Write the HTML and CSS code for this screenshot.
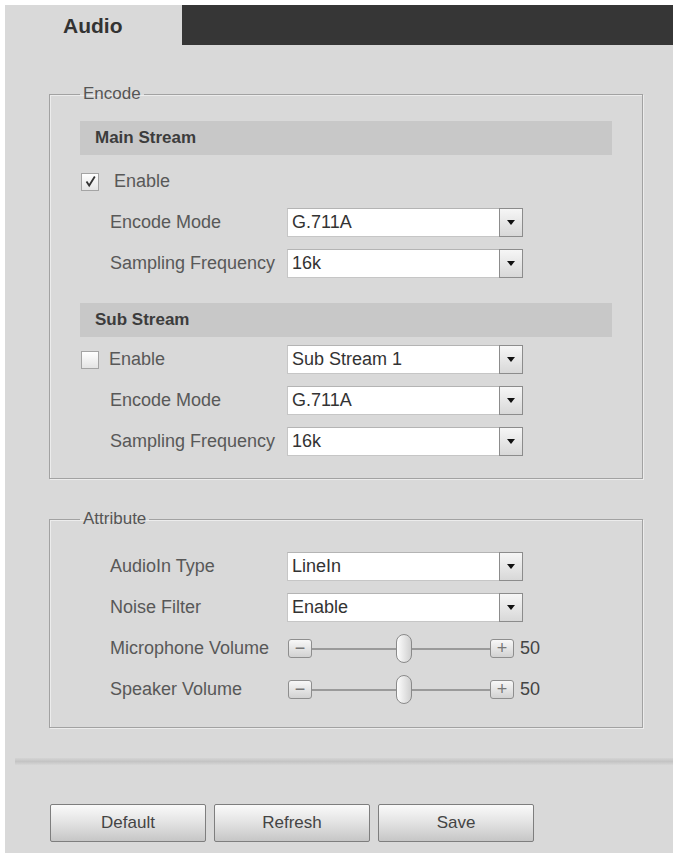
FILE: index.html
```html
<!DOCTYPE html>
<html lang="en">
<head>
  <meta charset="UTF-8">
  <meta name="viewport" content="width=device-width, initial-scale=1.0">
  <title>Audio</title>
  <link rel="stylesheet" href="styles.css">
</head>
<body>
  <div class="panel">
    <div class="tabs">
      <div class="tab">Audio</div>
      <div class="tab-fill"></div>
    </div>

    <div class="main">
      <fieldset class="group">
        <legend>Encode</legend>

        <div class="bar">Main Stream</div>
        <div class="row first">
          <div class="check-label">
            <span class="checkbox">
              <svg width="13" height="13" viewBox="0 0 13 13"><path d="M2.5 6.5 L5.2 10.5 L10.8 1.5" fill="none" stroke="#333" stroke-width="1.8"/></svg>
            </span>
            <span class="check-text">Enable</span>
          </div>
        </div>
        <div class="row">
          <div class="label">Encode Mode</div>
          <div class="select"><span class="value">G.711A</span><span class="arrow"></span></div>
        </div>
        <div class="row">
          <div class="label">Sampling Frequency</div>
          <div class="select"><span class="value">16k</span><span class="arrow"></span></div>
        </div>

        <div class="bar sub">Sub Stream</div>
        <div class="row sub-first">
          <div class="check-label">
            <span class="checkbox"></span>
            <span class="check-text narrow">Enable</span>
          </div>
          <div class="select"><span class="value">Sub Stream 1</span><span class="arrow"></span></div>
        </div>
        <div class="row">
          <div class="label">Encode Mode</div>
          <div class="select"><span class="value">G.711A</span><span class="arrow"></span></div>
        </div>
        <div class="row">
          <div class="label">Sampling Frequency</div>
          <div class="select"><span class="value">16k</span><span class="arrow"></span></div>
        </div>
      </fieldset>

      <fieldset class="group attr">
        <legend>Attribute</legend>

        <div class="row">
          <div class="label">AudioIn Type</div>
          <div class="select"><span class="value">LineIn</span><span class="arrow"></span></div>
        </div>
        <div class="row">
          <div class="label">Noise Filter</div>
          <div class="select"><span class="value">Enable</span><span class="arrow"></span></div>
        </div>
        <div class="row">
          <div class="label">Microphone Volume</div>
          <div class="slider">
            <span class="step">&minus;</span>
            <span class="track"><span class="thumb"></span></span>
            <span class="step">+</span>
            <span class="slider-value">50</span>
          </div>
        </div>
        <div class="row">
          <div class="label">Speaker Volume</div>
          <div class="slider">
            <span class="step">&minus;</span>
            <span class="track"><span class="thumb"></span></span>
            <span class="step">+</span>
            <span class="slider-value">50</span>
          </div>
        </div>
      </fieldset>
    </div>

    <div class="divider"></div>

    <div class="actions">
      <button class="btn">Default</button>
      <button class="btn">Refresh</button>
      <button class="btn">Save</button>
    </div>
  </div>
</body>
</html>
```

FILE: styles.css
```css
body {
  margin: 0;
  padding: 5px 0 0 5px;
  background-color: #fff;
  font-family: "Liberation Sans", Arial, sans-serif;
  color: #555;
}

.panel {
  width: 668px;
  height: 848px;
  background-color: #d9d9d9;
}

/* tab strip */
.tabs {
  display: flex;
  height: 40px;
}

.tab {
  width: 119px;
  padding-left: 58px;
  font-size: 21px;
  font-weight: bold;
  color: #333;
  line-height: 42px;
}

.tab-fill {
  flex: 1;
  background-color: #363636;
}

.main {
  padding: 39px 0 0 44px;
}

/* fieldsets */
.group {
  box-sizing: border-box;
  width: 594px;
  margin: 0;
  padding: 17px 30px 16px 30px;
  border: 1px solid #a2a2a2;
  box-shadow: inset 1px 1px 0 #ececec, 1px 1px 0 #ececec;
}

.group legend {
  padding: 0 3px;
  font-size: 17px;
  line-height: 20px;
  color: #555;
}

.group.attr {
  margin-top: 30px;
  padding-bottom: 17px;
}

.bar {
  height: 34px;
  line-height: 34px;
  padding-left: 15px;
  background-color: #c8c8c8;
  font-size: 17px;
  font-weight: bold;
  color: #3c3c3c;
}

.bar.sub {
  margin-top: 19px;
}

.row {
  display: flex;
  align-items: center;
  height: 41px;
  font-size: 18px;
}

.row.first {
  margin-top: 6px;
}

.row.sub-first {
  margin-top: 2px;
}

.label {
  width: 177px;
  margin-left: 30px;
  color: #585858;
  white-space: nowrap;
}

.check-label {
  display: flex;
  align-items: center;
  width: 207px;
  color: #585858;
}

.checkbox {
  display: flex;
  align-items: center;
  justify-content: center;
  box-sizing: border-box;
  width: 18px;
  height: 18px;
  margin-left: 1px;
  border: 1px solid #a4a4a4;
  background: linear-gradient(#fff, #e4e4e4);
}

.check-text {
  margin-left: 15px;
}

.check-text.narrow {
  margin-left: 10px;
}

/* dropdowns */
.select {
  display: flex;
  box-sizing: border-box;
  width: 236px;
  height: 29px;
  background-color: #fff;
  border: 1px solid #c6c6c6;
  border-top-color: #b4b4b4;
}

.select .value {
  flex: 1;
  padding-left: 4px;
  line-height: 27px;
  color: #333;
}

.select .arrow {
  position: relative;
  box-sizing: border-box;
  width: 24px;
  margin: -1px -1px -1px 0;
  border: 1px solid #8c8c8c;
  background: linear-gradient(#f6f6f6, #d8d8d8);
}

.select .arrow::after {
  content: "";
  position: absolute;
  left: 7px;
  top: 11px;
  border-left: 4px solid transparent;
  border-right: 4px solid transparent;
  border-top: 5px solid #111;
}

/* volume sliders */
.slider {
  display: flex;
  align-items: center;
  margin-left: 1px;
}

.step {
  box-sizing: border-box;
  width: 24px;
  height: 19px;
  border: 1px solid #8e8e8e;
  border-radius: 3px;
  background: linear-gradient(#f8f8f8, #d2d2d2);
  font-size: 18px;
  line-height: 16px;
  text-align: center;
  color: #777;
}

.track {
  position: relative;
  width: 178px;
  height: 2px;
  background-color: #9a9a9a;
}

.thumb {
  position: absolute;
  left: 84px;
  top: -14px;
  box-sizing: border-box;
  width: 16px;
  height: 29px;
  border: 1px solid #8a8a8a;
  border-radius: 8px;
  background: linear-gradient(90deg, #fdfdfd, #d0d0d0);
}

.slider-value {
  margin-left: 6px;
  color: #444;
}

/* bottom */
.divider {
  height: 7px;
  margin: 30px 0 0 10px;
  background: linear-gradient(#d4d4d4, #c4c4c4 50%, #d6d6d6);
}

.actions {
  display: flex;
  gap: 8px;
  margin-top: 39px;
  padding-left: 45px;
}

.btn {
  width: 156px;
  height: 38px;
  border: 1px solid #7e7e7e;
  border-radius: 2px;
  background: linear-gradient(#fafafa, #e2e2e2 50%, #c6c6c6);
  font-family: "Liberation Sans", Arial, sans-serif;
  font-size: 17px;
  color: #444;
}
```
